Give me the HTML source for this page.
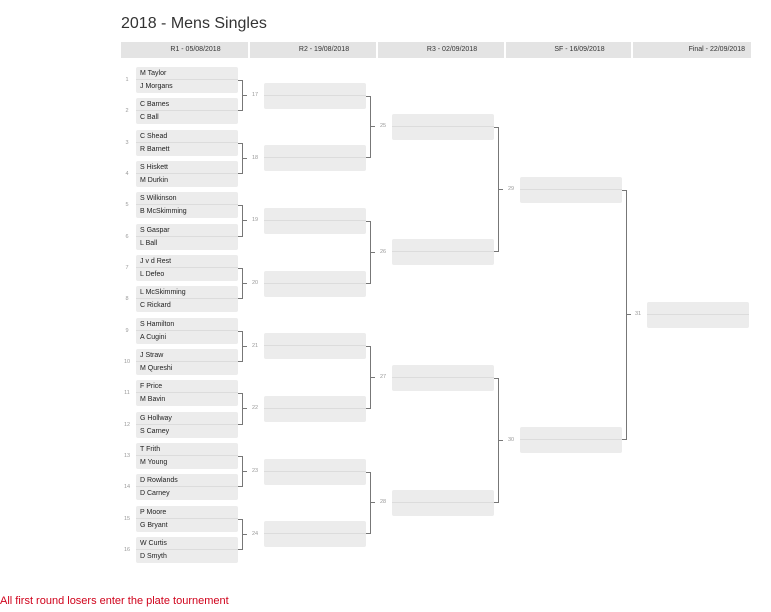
<!DOCTYPE html>
<html><head><meta charset="utf-8"><style>
*{margin:0;padding:0;box-sizing:border-box}
body{width:771px;height:612px;background:#fff;position:relative;font-family:"Liberation Sans",Arial,sans-serif;overflow:hidden}
h1{position:absolute;left:121px;top:15px;font-size:16px;font-weight:normal;color:#333;white-space:nowrap}
.h{position:absolute;top:42px;height:16px;background:#e4e4e4;font-size:7px;line-height:16px;color:#333;text-align:center;padding-left:22px}
.m{position:absolute;width:102px;height:26px;background:#ececec;border-radius:2px}
.m .p{height:13px;line-height:14px;font-size:7px;color:#222;padding-left:4px;white-space:nowrap}
.m .p:first-child{border-bottom:1px solid #dcdcdc}
.s{position:absolute;left:123px;font-size:5.5px;color:#999;width:8px;text-align:center}
.c{position:absolute;width:5px;border:1.5px solid #777;border-left:none}
.t{position:absolute;width:4px;height:0;border-top:1.5px solid #777}
.n{position:absolute;font-size:5.5px;color:#999}
.f{position:absolute;left:0;top:595px;font-size:11px;color:#d0021b;white-space:nowrap}
</style></head><body>
<h1>2018 - Mens Singles</h1>
<div class="h" style="left:121px;width:127px">R1 - 05/08/2018</div>
<div class="h" style="left:250px;width:126px">R2 - 19/08/2018</div>
<div class="h" style="left:378px;width:126px">R3 - 02/09/2018</div>
<div class="h" style="left:506px;width:125px">SF - 16/09/2018</div>
<div class="h" style="left:633px;width:118px;text-align:right;padding-right:6px">Final - 22/09/2018</div>

<div class="m" style="left:136px;top:67px"><div class="p">M Taylor</div><div class="p">J Morgans</div></div>
<div class="m" style="left:136px;top:98.3px"><div class="p">C Barnes</div><div class="p">C Ball</div></div>
<div class="m" style="left:136px;top:129.7px"><div class="p">C Shead</div><div class="p">R Barnett</div></div>
<div class="m" style="left:136px;top:161px"><div class="p">S Hiskett</div><div class="p">M Durkin</div></div>
<div class="m" style="left:136px;top:192.3px"><div class="p">S Wilkinson</div><div class="p">B McSkimming</div></div>
<div class="m" style="left:136px;top:223.7px"><div class="p">S Gaspar</div><div class="p">L Ball</div></div>
<div class="m" style="left:136px;top:255px"><div class="p">J v d Rest</div><div class="p">L Defeo</div></div>
<div class="m" style="left:136px;top:286.3px"><div class="p">L McSkimming</div><div class="p">C Rickard</div></div>
<div class="m" style="left:136px;top:317.7px"><div class="p">S Hamilton</div><div class="p">A Cugini</div></div>
<div class="m" style="left:136px;top:349px"><div class="p">J Straw</div><div class="p">M Qureshi</div></div>
<div class="m" style="left:136px;top:380.3px"><div class="p">F Price</div><div class="p">M Bavin</div></div>
<div class="m" style="left:136px;top:411.7px"><div class="p">G Hollway</div><div class="p">S Carney</div></div>
<div class="m" style="left:136px;top:443px"><div class="p">T Frith</div><div class="p">M Young</div></div>
<div class="m" style="left:136px;top:474.3px"><div class="p">D Rowlands</div><div class="p">D Carney</div></div>
<div class="m" style="left:136px;top:505.7px"><div class="p">P Moore</div><div class="p">G Bryant</div></div>
<div class="m" style="left:136px;top:537px"><div class="p">W Curtis</div><div class="p">D Smyth</div></div>

<div class="s" style="top:77px">1</div><div class="s" style="top:108.3px">2</div><div class="s" style="top:139.7px">3</div><div class="s" style="top:171px">4</div>
<div class="s" style="top:202.3px">5</div><div class="s" style="top:233.7px">6</div><div class="s" style="top:265px">7</div><div class="s" style="top:296.3px">8</div>
<div class="s" style="top:327.7px">9</div><div class="s" style="top:359px">10</div><div class="s" style="top:390.3px">11</div><div class="s" style="top:421.7px">12</div>
<div class="s" style="top:453px">13</div><div class="s" style="top:484.3px">14</div><div class="s" style="top:515.7px">15</div><div class="s" style="top:547px">16</div>

<div class="c" style="left:238px;top:80px;height:31.3px"></div><div class="t" style="left:243px;top:95px"></div><div class="n" style="left:252px;top:92px">17</div>
<div class="c" style="left:238px;top:142.7px;height:31.3px"></div><div class="t" style="left:243px;top:157.7px"></div><div class="n" style="left:252px;top:154.7px">18</div>
<div class="c" style="left:238px;top:205.3px;height:31.3px"></div><div class="t" style="left:243px;top:220.3px"></div><div class="n" style="left:252px;top:217.3px">19</div>
<div class="c" style="left:238px;top:268px;height:31.3px"></div><div class="t" style="left:243px;top:283px"></div><div class="n" style="left:252px;top:280px">20</div>
<div class="c" style="left:238px;top:330.7px;height:31.3px"></div><div class="t" style="left:243px;top:345.7px"></div><div class="n" style="left:252px;top:342.7px">21</div>
<div class="c" style="left:238px;top:393.3px;height:31.3px"></div><div class="t" style="left:243px;top:408.3px"></div><div class="n" style="left:252px;top:405.3px">22</div>
<div class="c" style="left:238px;top:456px;height:31.3px"></div><div class="t" style="left:243px;top:471px"></div><div class="n" style="left:252px;top:468px">23</div>
<div class="c" style="left:238px;top:518.7px;height:31.3px"></div><div class="t" style="left:243px;top:533.7px"></div><div class="n" style="left:252px;top:530.7px">24</div>

<div class="m" style="left:264px;top:82.7px"><div class="p"></div><div class="p"></div></div>
<div class="m" style="left:264px;top:145.3px"><div class="p"></div><div class="p"></div></div>
<div class="m" style="left:264px;top:208px"><div class="p"></div><div class="p"></div></div>
<div class="m" style="left:264px;top:270.7px"><div class="p"></div><div class="p"></div></div>
<div class="m" style="left:264px;top:333.3px"><div class="p"></div><div class="p"></div></div>
<div class="m" style="left:264px;top:396px"><div class="p"></div><div class="p"></div></div>
<div class="m" style="left:264px;top:458.7px"><div class="p"></div><div class="p"></div></div>
<div class="m" style="left:264px;top:521.3px"><div class="p"></div><div class="p"></div></div>

<div class="c" style="left:366px;top:95.7px;height:62.6px"></div><div class="t" style="left:371px;top:126.3px"></div><div class="n" style="left:380px;top:123.3px">25</div>
<div class="c" style="left:366px;top:221px;height:62.7px"></div><div class="t" style="left:371px;top:251.7px"></div><div class="n" style="left:380px;top:248.7px">26</div>
<div class="c" style="left:366px;top:346.3px;height:62.7px"></div><div class="t" style="left:371px;top:377px"></div><div class="n" style="left:380px;top:374px">27</div>
<div class="c" style="left:366px;top:471.7px;height:62.6px"></div><div class="t" style="left:371px;top:502.3px"></div><div class="n" style="left:380px;top:499.3px">28</div>

<div class="m" style="left:392px;top:114px"><div class="p"></div><div class="p"></div></div>
<div class="m" style="left:392px;top:239.3px"><div class="p"></div><div class="p"></div></div>
<div class="m" style="left:392px;top:364.7px"><div class="p"></div><div class="p"></div></div>
<div class="m" style="left:392px;top:490px"><div class="p"></div><div class="p"></div></div>

<div class="c" style="left:494px;top:127px;height:125.3px"></div><div class="t" style="left:499px;top:189px"></div><div class="n" style="left:508px;top:186px">29</div>
<div class="c" style="left:494px;top:377.7px;height:125.3px"></div><div class="t" style="left:499px;top:439.6px"></div><div class="n" style="left:508px;top:436.6px">30</div>

<div class="m" style="left:520px;top:176.7px"><div class="p"></div><div class="p"></div></div>
<div class="m" style="left:520px;top:427.3px"><div class="p"></div><div class="p"></div></div>

<div class="c" style="left:622px;top:189.7px;height:250.6px"></div><div class="t" style="left:627px;top:314.3px"></div><div class="n" style="left:635px;top:311.3px">31</div>

<div class="m" style="left:647px;top:302px"><div class="p"></div><div class="p"></div></div>

<div class="f">All first round losers enter the plate tournement</div>
</body></html>
